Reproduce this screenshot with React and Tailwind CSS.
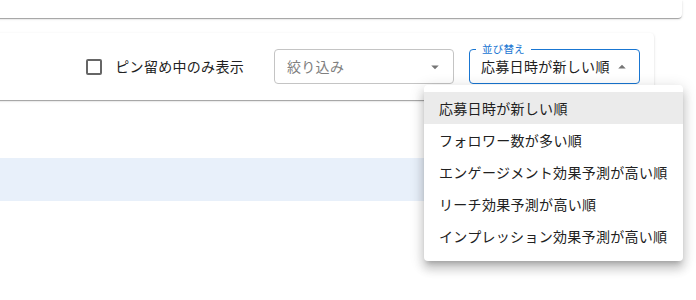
import React from "react";

const font = { fontFamily: '"Noto Sans CJK JP", sans-serif' };

function Arrow({ up }) {
  return (
    <svg width="18" height="18" viewBox="0 0 24 24" className="shrink-0">
      <path d={up ? "M7 14l5-5 5 5z" : "M7 10l5 5 5-5z"} fill="#757575" />
    </svg>
  );
}

const items = [
  "応募日時が新しい順",
  "フォロワー数が多い順",
  "エンゲージメント効果予測が高い順",
  "リーチ効果予測が高い順",
  "インプレッション効果予測が高い順",
];

export default function App() {
  return (
    <div
      className="relative w-[696px] h-[300px] bg-white overflow-hidden antialiased text-[14px] tracking-[0.3px] text-[#212121]"
      style={font}
    >
      <div className="-ml-[8px] w-[690px] h-[18px] bg-white rounded-b-[4px] shadow-[0_2px_1px_-1px_rgba(0,0,0,0.2),0_1px_1px_0_rgba(0,0,0,0.14),0_1px_3px_0_rgba(0,0,0,0.12)]" />
      <div className="-ml-[8px] mt-[15px] w-[662px] h-[67px] bg-white rounded-[4px] shadow-[0_2px_1px_-1px_rgba(0,0,0,0.2),0_1px_1px_0_rgba(0,0,0,0.14),0_1px_3px_0_rgba(0,0,0,0.12)] flex items-center justify-end pr-[14px]">
        <label className="flex items-center mr-[30px]">
          <span className="w-[16px] h-[16px] border-2 border-[#666] rounded-[2px] mr-[13px]" />
          <span className="leading-none -mt-[2px]">ピン留め中のみ表示</span>
        </label>
        <div className="w-[180px] h-[35px] border border-[#c4c4c4] rounded-[4px] flex items-center justify-between pl-[12px] pr-[9px]">
          <span className="text-[#808080]">絞り込み</span>
          <Arrow />
        </div>
        <div className="relative ml-[15px] w-[171px] h-[35px] border border-[#1976d2] rounded-[4px] flex items-center justify-between pl-[11px] pr-[8px]">
          <span className="absolute left-[6px] -top-[8px] bg-white px-[6px] text-[10.5px] leading-[14px] tracking-[0.2px] text-[#1976d2]">
            並び替え
          </span>
          <span>応募日時が新しい順</span>
          <Arrow up />
        </div>
      </div>
      <div className="mt-[58px] w-[654px] h-[43px] bg-[#e8f0fa]" />

      <div className="absolute left-[424px] top-[85px] w-[259px] bg-white rounded-[4px] pt-[7px] pb-[9px] shadow-[0_5px_5px_-3px_rgba(0,0,0,0.2),0_8px_10px_1px_rgba(0,0,0,0.14),0_3px_14px_2px_rgba(0,0,0,0.12)]">
        {items.map((t, i) => (
          <div
            key={t}
            className={
              "h-[32px] flex items-center pl-[15px] whitespace-nowrap " +
              (i === 0 ? "bg-[#ebebeb]" : "")
            }
          >
            {t}
          </div>
        ))}
      </div>
    </div>
  );
}
